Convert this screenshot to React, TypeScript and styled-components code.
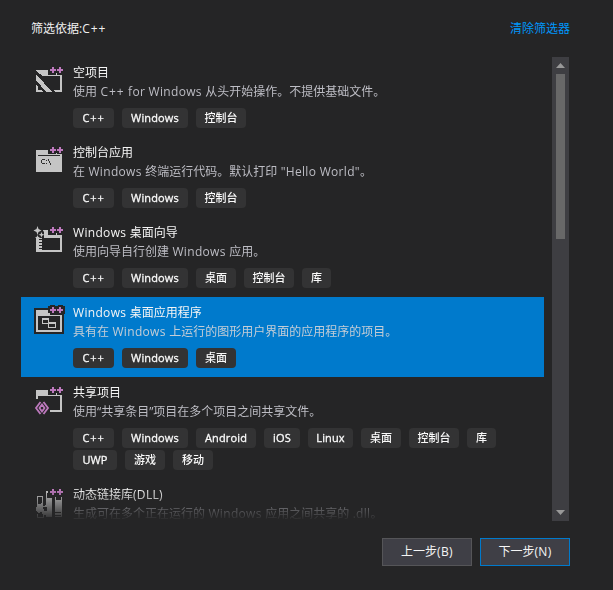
import React from 'react';
import styled, { createGlobalStyle } from 'styled-components';

const GlobalStyle = createGlobalStyle`
  * { box-sizing: border-box; }
  body {
    margin: 0;
    background: #252526;
    color: #f1f1f1;
    font: 12px/16px 'Open Sans', 'Noto Sans CJK SC', sans-serif;
    overflow: hidden;
  }
`;

const Page = styled.main`
  width: 613px;
  height: 590px;
  display: flex;
  flex-direction: column;
  background: #252526;
`;

const Header = styled.header`
  height: 57px;
  padding: 21px 43px 0 31px;
  display: flex;
  justify-content: space-between;
`;

const ClearLink = styled.a`
  color: #0097fb;
`;

const Body = styled.div`
  display: flex;
  height: 464px;
  padding-left: 21px;
  gap: 8px;
`;

const List = styled.div`
  width: 523px;
  height: 464px;
  overflow: hidden;
  display: flex;
  flex-direction: column;
  mask-image: linear-gradient(#000 432px, rgba(0, 0, 0, 0.04) 463px);
`;

const Row = styled.article<{ $selected?: boolean }>`
  flex: none;
  display: flex;
  padding: 0 0 9px 7px;
  background: ${p => (p.$selected ? '#007acc' : 'transparent')};
`;

const Icon = styled.svg`
  flex: none;
  width: 45px;
  height: 45px;
  margin-top: 3px;
`;

const Content = styled.div`
  flex: 1;
  padding-top: 8px;
`;

const Line = styled.div`
  height: 19px;
  line-height: 16px;
  white-space: nowrap;
`;

const Latin = styled.span<{ $wide?: boolean }>`
  letter-spacing: ${p => (p.$wide ? 0.95 : 0.32)}px;
`;

const Title = styled(Line)`
  color: #f5f5f5;
`;

const Description = styled(Line)<{ $selected?: boolean }>`
  color: ${p => (p.$selected ? '#c4cdd6' : '#bdbdc4')};
`;

const Tags = styled.div`
  display: flex;
  flex-wrap: wrap;
  gap: 2px 8px;
  padding-top: 5px;
`;

const Tag = styled.span<{ $width: number; $latin: boolean; $wide: boolean }>`
  width: ${p => p.$width}px;
  height: 20px;
  border-radius: 4px;
  background: #333334;
  color: #fafafa;
  font-size: 11px;
  font-weight: ${p => (p.$latin ? 400 : 500)};
  letter-spacing: ${p => (p.$wide ? 0.9 : p.$latin ? 0.15 : 0)}px;
  -webkit-text-stroke: ${p => (p.$latin ? '0.3px #fafafa' : '0')};
  line-height: 19px;
  text-align: center;
  white-space: nowrap;
`;

const ScrollBar = styled.div`
  width: 17px;
  height: 464px;
  background: #3e3e42;
  display: flex;
  flex-direction: column;
  align-items: center;
`;

const Arrow = styled.svg`
  width: 17px;
  height: 17px;
  fill: #999;
`;

const Thumb = styled.div`
  width: 9px;
  height: 165px;
  margin-bottom: auto;
  background: #686868;
`;

const Footer = styled.footer`
  display: flex;
  justify-content: flex-end;
  gap: 8px;
  padding: 17px 43px 0 0;
`;

const Button = styled.button<{ $primary?: boolean }>`
  width: 90px;
  height: 28px;
  padding: 0 0 1px;
  border: 1px solid ${p => (p.$primary ? '#007acc' : '#555558')};
  background: #3f3f46;
  color: #f5f5f5;
  font: inherit;
`;

const GRAY = '#c5c5c5';
const DARK = '#252526';

const PlusPlus = () => (
  <path fill="#bd79bd" d="M24 7h2v2h2v2h-2v2h-2v-2h-2V9h2zM31 7h2v2h2v2h-2v2h-2v-2h-2V9h2z" />
);

type Kind = 'empty' | 'console' | 'wizard' | 'desktop' | 'shared' | 'dll';

const FolderFrame = () => (
  <path
    fill={GRAY}
    fillRule="evenodd"
    d="M8 10h12v5h8v-2h1v2h5v17H8zM10 16v14h22V16z"
  />
);

const art: Record<Kind, React.ReactNode> = {
  empty: (
    <>
      <path fill={GRAY} d="M8 10h12v5h8v-2h1v2h5v17h-7l-1-2h6V16H15L8 11z" />
      <path fill={GRAY} d="M8 14l16 18h-6L8 20zM8 24l7 8H8z" />
      <path fill={DARK} d="M10 27l3 3h-3z" />
    </>
  ),
  console: (
    <>
      <path fill={GRAY} d="M8 10h12v4h8v-1h1v1h5v18H8z" />
      <path stroke="#2b2b2b" d="M10 15.5h22" />
      <path
        fill="none"
        stroke="#303030"
        d="M17 19.5h-3M13.5 20v3M14 23.5h3M18.5 20v1M18.5 23v1M20.5 19v2M21.5 21v2M22.5 23v2"
      />
    </>
  ),
  wizard: (
    <>
      <path fill={GRAY} fillRule="evenodd" d="M15 10h5v5h8v-2h1v2h5v17H8V18h24V17H15zM14 17v13h18V17z" />
      <path fill={DARK} d="M7 9h7l2 3v6H7zM11 19h3v1h-3zM11 22h3v1h-3zM11 25h3v1h-3zM11 28h3v1h-3z" />
      <path
        fill={GRAY}
        d="M9.5 6l1 3 3 1.5-3 1.5-1 3-1-3-3-1.5 3-1.5zM13.5 12l.8 2 2.2.7-2.2.8-.8 2-.8-2-2.2-.8 2.2-.7zM9.5 15l.7 1.8 1.8.7-1.8.8-.7 1.7-.7-1.7-1.8-.8 1.8-.7z"
      />
    </>
  ),
  desktop: (
    <>
      <path fill={DARK} d="M6 8h14V6h2V5h5v1h3V5h5v1h2v8h-1v20H6z" />
      <path fill={GRAY} fillRule="evenodd" d="M8 10h12v3h2v2h12v17H8zM10 16v14h22V16z" />
      <path fill="none" stroke={GRAY} d="M14.5 18.5h6v5h-6zM15 19.5h5" />
      <path fill={DARK} stroke={GRAY} d="M20.5 22.5h7v5h-7zM21 23.5h6" />
    </>
  ),
  shared: (
    <>
      <FolderFrame />
      <path fill={DARK} d="M8 19h8l6 6v9H6V21z" />
      <path
        fill="none"
        stroke="#bd79bd"
        strokeWidth="1.8"
        d="M12.5 22L8 28l4.5 6M15.5 22l4.5 6-4.5 6M14 24.5L11.5 28l2.5 3.5 2.5-3.5z"
      />
    </>
  ),
  dll: (
    <>
      <path fill="none" stroke={GRAY} d="M9.5 23v-9h5v9" />
      <path fill={GRAY} d="M18 9h2v2h-1v5h5v19h-6zM27 18h7v17h-7z" />
      <path stroke={GRAY} d="M27.5 15v5M33.5 15v5" />
      <path stroke={DARK} d="M27 30.5h6M27 33.5h6" />
      <path fill={GRAY} d="M9 23l5-2 1 3 3-1 4 2v5l-3 3h-4l-1-3-4 1-2-3z" />
      <path fill={DARK} d="M15 25h4v4h-3v-2h-1z" />
      <path stroke={GRAY} fill="none" d="M9.5 32v3h6v-2" />
    </>
  ),
};

interface Template {
  kind: Kind;
  title: string;
  description: string;
  tags: string[];
  selected?: boolean;
}

const tagWidth: Record<string, number> = {
  'C++': 41, Windows: 66, 控制台: 50, 桌面: 40, 库: 29, Android: 60,
  iOS: 36, Linux: 45, UWP: 44, 游戏: 40, 移动: 40,
};

const templates: Template[] = [
  { kind: 'empty', title: '空项目', description: '使用 C++ for Windows 从头开始操作。不提供基础文件。', tags: ['C++', 'Windows', '控制台'] },
  { kind: 'console', title: '控制台应用', description: '在 Windows 终端运行代码。默认打印 "Hello World"。', tags: ['C++', 'Windows', '控制台'] },
  { kind: 'wizard', title: 'Windows 桌面向导', description: '使用向导自行创建 Windows 应用。', tags: ['C++', 'Windows', '桌面', '控制台', '库'] },
  { kind: 'desktop', title: 'Windows 桌面应用程序', description: '具有在 Windows 上运行的图形用户界面的应用程序的项目。', tags: ['C++', 'Windows', '桌面'], selected: true },
  { kind: 'shared', title: '共享项目', description: '使用“共享条目”项目在多个项目之间共享文件。', tags: ['C++', 'Windows', 'Android', 'iOS', 'Linux', '桌面', '控制台', '库', 'UWP', '游戏', '移动'] },
  { kind: 'dll', title: '动态链接库(DLL)', description: '生成可在多个正在运行的 Windows 应用之间共享的 .dll。', tags: [] },
];

// Latin runs are tracked slightly wider than the ideographs around them.
const MixedText = ({ children }: { children: string }) => (
  <span>
    {children.split(/(C\+\+|[ -~]+?(?=C\+\+)|[ -~]+)/).map((part, i) =>
      i % 2 ? <Latin key={i} $wide={part === 'C++'}>{part}</Latin> : part,
    )}
  </span>
);

export default function App() {
  return (
    <Page>
      <GlobalStyle />
      <Header>
        <span>筛选依据:<Latin $wide>C++</Latin></span>
        <ClearLink>清除筛选器</ClearLink>
      </Header>
      <Body>
        <List>
          {templates.map(t => (
            <Row key={t.kind} $selected={t.selected}>
              <Icon viewBox="0 0 45 45" shapeRendering={t.kind === 'shared' || t.kind === 'wizard' ? 'auto' : 'crispEdges'}>
                {art[t.kind]}
                <PlusPlus />
              </Icon>
              <Content>
                <Title><MixedText>{t.title}</MixedText></Title>
                <Description $selected={t.selected}><MixedText>{t.description}</MixedText></Description>
                <Tags>
                  {t.tags.map(tag => (
                    <Tag key={tag} $width={tagWidth[tag]} $latin={/^[A-Za-z]/.test(tag)} $wide={tag === 'C++'}>{tag}</Tag>
                  ))}
                </Tags>
              </Content>
            </Row>
          ))}
        </List>
        <ScrollBar>
          <Arrow viewBox="0 0 17 17"><path d="M4 11l4.5-5 4.5 5z" /></Arrow>
          <Thumb />
          <Arrow viewBox="0 0 17 17"><path d="M4 6l4.5 5L13 6z" /></Arrow>
        </ScrollBar>
      </Body>
      <Footer>
        <Button><MixedText>上一步(B)</MixedText></Button>
        <Button $primary><MixedText>下一步(N)</MixedText></Button>
      </Footer>
    </Page>
  );
}
